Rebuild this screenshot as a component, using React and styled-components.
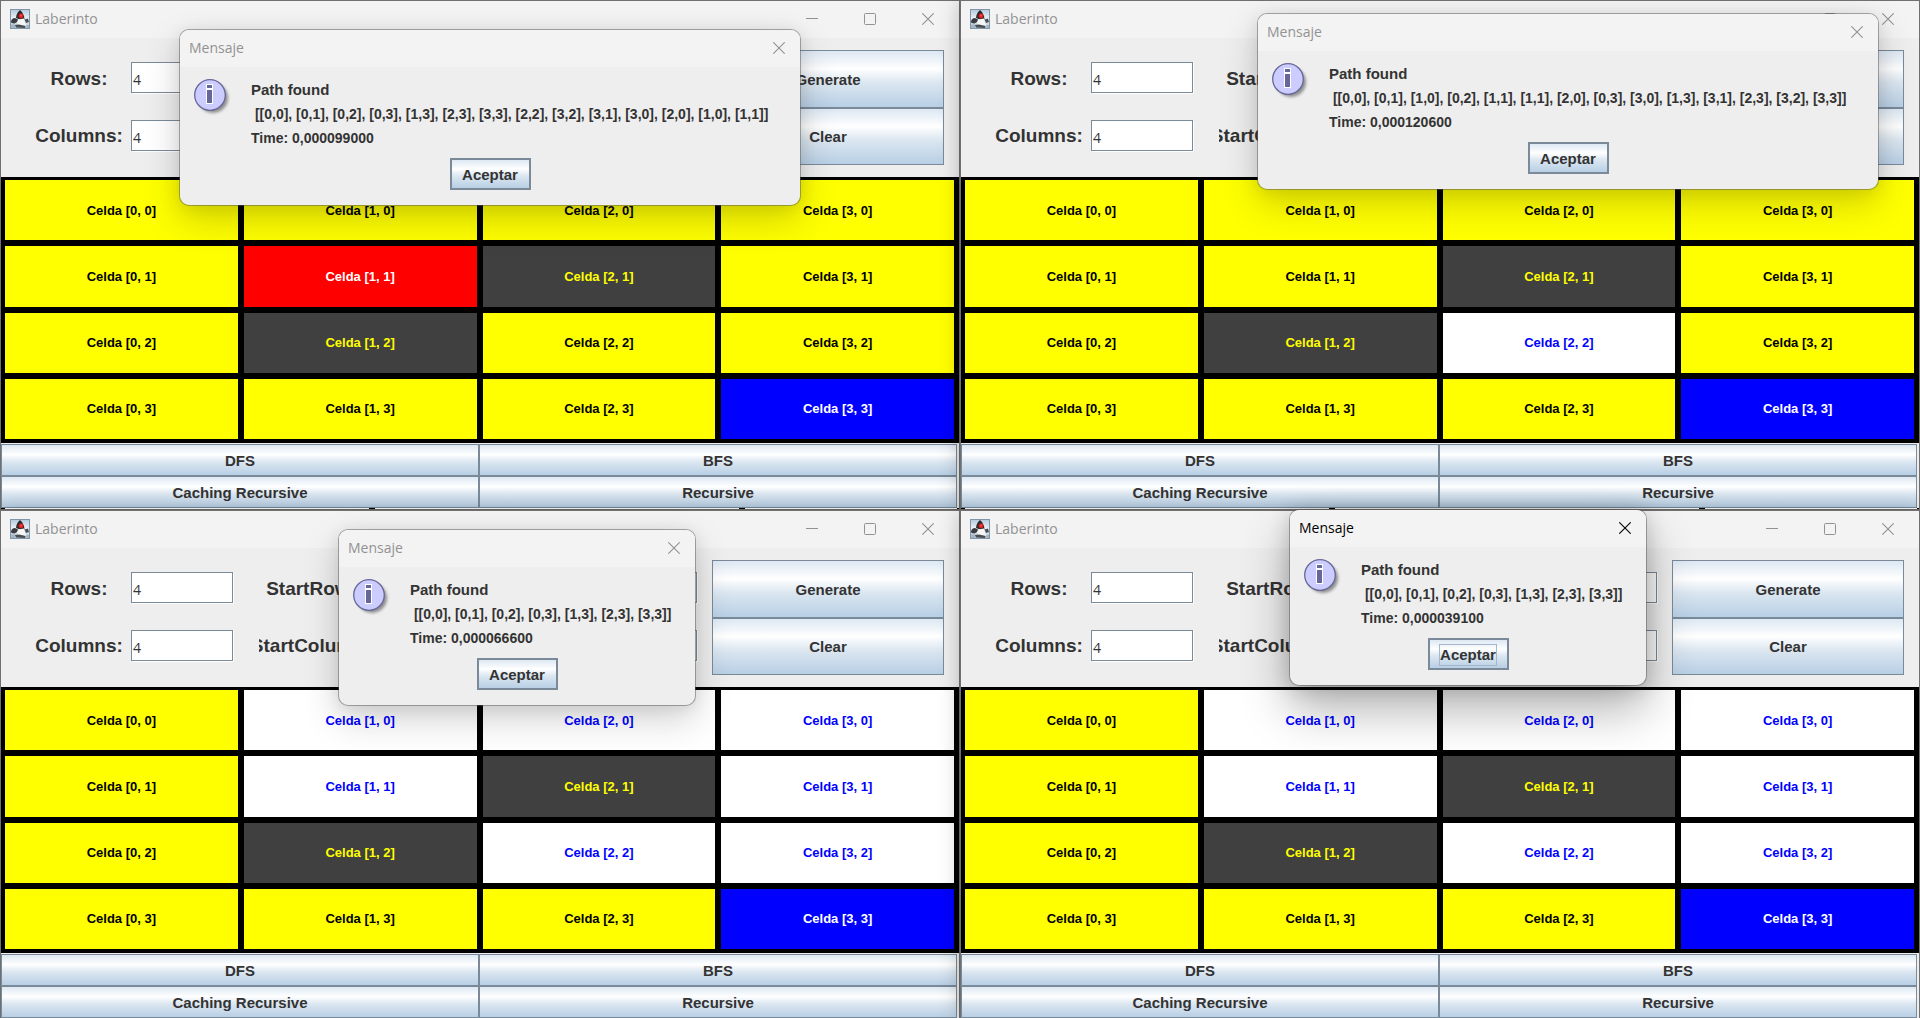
import React, { useId } from "react";
import styled, { createGlobalStyle, css } from "styled-components";

const GlobalStyle = createGlobalStyle`
  *, *::before, *::after { box-sizing: border-box; }
  body {
    margin: 0;
    background: #eeeeee;
    color: #333333;
    font-family: "Liberation Sans", Arial, sans-serif;
    overflow: hidden;
  }
  button, input { font: inherit; color: inherit; margin: 0; border-radius: 0; }
  p { margin: 0; }
`;

const steel = "#7a8a99";

const metal = css`
  background: linear-gradient(#dde8f3 0%, #ffffff 32%, #dce7f1 56%, #b8cfe5 100%);
  border: 1px solid ${steel};
`;

const Desktop = styled.main`
  display: grid;
  grid-template-columns: repeat(2, minmax(0, 1fr));
  height: 100vh;
  align-content: start;
  overflow: hidden;
`;

const Frame = styled.section`
  position: relative;
  z-index: 0;
  display: flex;
  flex-direction: column;
  border: 1px solid #707070;
  background: #eeeeee;
  box-shadow: 0 2px 20px rgba(0, 0, 0, 0.25);
`;

const TitleBar = styled.header`
  display: flex;
  align-items: center;
  height: 37px;
  padding-left: 9px;
  padding-bottom: 1px;
  gap: 5px;
  background: #f3f3f3;
  color: ${(p) => (p.$active ? "#000000" : "#929292")};
  font: 14px/20px "Open Sans", "Noto Sans", sans-serif;
`;

const TitleText = styled.span`
  flex: 1;
`;

const Controls = styled.div`
  display: flex;
  padding-right: 2px;
`;

const ControlButton = styled.button`
  display: grid;
  place-items: center;
  width: ${(p) => (p.$narrow ? 42 : 58)}px;
  height: 36px;
  padding: 0;
  border: 0;
  background: none;
`;

const Settings = styled.form`
  display: grid;
  grid-template-columns: repeat(3, 206px) minmax(0, 1fr);
  column-gap: 26px;
  padding: 12px 15px 12px 26px;
  height: 139px;
`;

const FieldPair = styled.div`
  display: grid;
  grid-template-rows: repeat(2, 1fr);
`;

const Field = styled.div`
  display: grid;
  grid-template-columns: 104px 102px;
  align-items: center;
`;

const FieldLabel = styled.label`
  display: flex;
  justify-content: center;
  overflow: hidden;
  white-space: nowrap;
  font-size: 19px;
  line-height: 24px;
  font-weight: 700;
`;

const FieldInput = styled.input`
  width: 100%;
  height: 31px;
  margin-bottom: 2px;
  padding: 4px 1px 0;
  border: 1px solid ${steel};
  background: #ffffff;
  box-shadow: 1px 1px 0 #ffffff;
  font: 14px/20px "Open Sans", "Noto Sans", sans-serif;
  outline: none;
`;

const Actions = styled.div`
  display: grid;
  grid-template-rows: repeat(2, 1fr);
  margin-left: -11px;
`;

const MetalButton = styled.button`
  ${metal}
  padding: 2px 0 0;
  font-size: 15px;
  line-height: 20px;
  font-weight: 700;
`;

const Maze = styled.div`
  display: grid;
  grid-template: repeat(4, 1fr) / repeat(4, 1fr);
  gap: 6px;
  height: 266px;
  padding: 3px 5px 4px 4px;
  background: #000000;
`;

const tones = {
  visited: { background: "#ffff00", color: "#000000" },
  wall: { background: "#404040", color: "#ffff00" },
  open: { background: "#ffffff", color: "#0000ff" },
  start: { background: "#ff0000", color: "#ffffff" },
  goal: { background: "#0000ff", color: "#ffffff" },
};

const Cell = styled.button`
  padding: 1px 0 0;
  border: 0;
  background: ${(p) => tones[p.$tone].background};
  color: ${(p) => tones[p.$tone].color};
  font-size: 13px;
  line-height: 16px;
  font-weight: 700;
`;

const Solvers = styled.div`
  display: grid;
  grid-template-columns: repeat(2, 1fr);
  grid-auto-rows: 32px;
  padding: 1px 2px 0 0;
`;

const BottomEdge = styled.div`
  height: 1px;
  background: repeating-linear-gradient(90deg, #000000 0 6px, #ffffff 6px 370px);
  background-position-x: -2px;
`;

const DialogBox = styled.section`
  position: absolute;
  z-index: 1;
  left: ${(p) => p.$x}px;
  top: ${(p) => p.$y}px;
  width: ${(p) => p.$width}px;
  border: 1px solid rgba(90, 90, 90, 0.5);
  border-radius: 10px;
  background: #eeeeee;
  background-clip: padding-box;
  box-shadow: ${(p) =>
    p.$active
      ? "0 24px 48px rgba(0, 0, 0, 0.3), 0 2px 20px rgba(0, 0, 0, 0.16)"
      : "0 14px 36px rgba(0, 0, 0, 0.18), 0 2px 16px rgba(0, 0, 0, 0.08)"};

  ${TitleBar} {
    border-radius: 9px 9px 0 0;
  }
`;

const DialogBody = styled.div`
  display: grid;
  grid-template-columns: 40px minmax(0, 1fr);
  column-gap: 17px;
  padding: 11px 14px 15px;
`;

const Message = styled.div`
  font-size: 15px;
  line-height: 24px;
  font-weight: 700;
  white-space: pre;
`;

const Result = styled.p`
  font-size: 14px;
`;

const DialogFooter = styled.div`
  grid-column: 1 / -1;
  display: flex;
  justify-content: center;
  padding-top: 8px;
`;

const AcceptButton = styled(MetalButton)`
  width: 81px;
  height: 32px;
  border-width: 2px;
`;

const FocusMark = styled.span`
  display: inline-block;
  outline: ${(p) => (p.$focused ? "1px solid #a3b8cc" : "none")};
`;

const InfoPicture = styled.svg`
  display: block;
`;

function DukeIcon() {
  return (
    <svg width="20" height="20" viewBox="0 0 20 20" aria-hidden="true">
      <defs>
        <linearGradient id="dukeSky" x1="0" y1="0" x2="0" y2="1">
          <stop offset="0" stopColor="#b4cbdc" />
          <stop offset="0.5" stopColor="#eef3f6" />
          <stop offset="1" stopColor="#b3c4d1" />
        </linearGradient>
      </defs>
      <rect x="0.5" y="0.5" width="19" height="19" fill="url(#dukeSky)" stroke="#7f95a9" />
      <path d="M8 3 L10 1 L12 3 L14 7 L14.500 10.500 L11 11 L6 9 L6.500 6 Z" fill="#2c2c30" />
      <path d="M8 10.500 L14 9.500 L15 13 L16 17 L12 16 L8 16 L7 13 Z" fill="#f6f6f6" />
      <path d="M1 12.500 Q1.500 9 5 9 L8 10.500 L7 13 L4.500 14.500 L1.500 14 Z" fill="#3c3c40" />
      <path d="M14.500 10.500 L18 9.500 L19 13 L16 14 Z" fill="#4c5056" />
      <path d="M5 16 L9 15.500 L15.500 17 L15 19 L6 18.500 Z" fill="#4a4d51" />
      <path d="M1 15.500 L5 15.500 L5 19 L1 19 Z M16.500 16 H19 V19 H16.500 Z" fill="#a3b4c3" />
      <circle cx="11" cy="7" r="2.400" fill="#e01c1c" />
      <circle cx="11" cy="6.500" r="1.100" fill="#ff4434" />
    </svg>
  );
}

function InfoIcon() {
  return (
    <InfoPicture width="40" height="40" viewBox="0 0 40 40" aria-hidden="true">
      <defs>
        <filter id="infoShadow" x="-20%" y="-20%" width="150%" height="150%">
          <feGaussianBlur stdDeviation="1.600" />
        </filter>
      </defs>
      <circle cx="19" cy="20" r="15" fill="#000000" opacity="0.4" filter="url(#infoShadow)" />
      <circle cx="16" cy="17" r="15.300" fill="#ccccff" stroke="#666699" strokeWidth="1.300" />
      <path d="M12 6 H19 V26 H12 Z" fill="#ffffff" />
      <path d="M13 7 H18 V10 H13 Z M13 12 H18 V25 H13 Z" fill="#666699" />
    </InfoPicture>
  );
}

function Glyph({ kind }) {
  return (
    <svg
      width="12"
      height="12"
      viewBox="0 0 12 12"
      fill="none"
      stroke="currentColor"
      strokeWidth="1.100"
      aria-hidden="true"
    >
      {kind === "minimize" && <path d="M0 5.500 H12" strokeWidth="1" />}
      {kind === "maximize" && <rect x="0.500" y="0.500" width="11" height="11" rx="1" strokeWidth="1" />}
      {kind === "close" && <path d="M0.300 0.300 L11.700 11.700 M11.700 0.300 L0.300 11.700" />}
    </svg>
  );
}

function LabelledInput({ label, value }) {
  const id = useId();
  return (
    <Field>
      <FieldLabel htmlFor={id}>{label}</FieldLabel>
      <FieldInput id={id} type="text" defaultValue={value} />
    </Field>
  );
}

function Dialog({ x, y, width, path, time, active }) {
  return (
    <DialogBox role="dialog" aria-label="Mensaje" $x={x} $y={y} $width={width} $active={active}>
      <TitleBar $active={active}>
        <TitleText>Mensaje</TitleText>
        <ControlButton type="button" aria-label="Cerrar" $narrow>
          <Glyph kind="close" />
        </ControlButton>
      </TitleBar>
      <DialogBody>
        <InfoIcon />
        <Message>
          <p>Path found</p>
          <Result>{" " + path}</Result>
          <Result>Time: {time}</Result>
        </Message>
        <DialogFooter>
          <AcceptButton type="button">
            <FocusMark $focused={active}>Aceptar</FocusMark>
          </AcceptButton>
        </DialogFooter>
      </DialogBody>
    </DialogBox>
  );
}

const letters = { y: "visited", w: "wall", o: "open", s: "start", g: "goal" };

function MazeWindow({ rows, dialog }) {
  return (
    <Frame>
      <TitleBar>
        <DukeIcon />
        <TitleText>Laberinto</TitleText>
        <Controls>
          {["minimize", "maximize", "close"].map((kind) => (
            <ControlButton key={kind} type="button" aria-label={kind}>
              <Glyph kind={kind} />
            </ControlButton>
          ))}
        </Controls>
      </TitleBar>
      <Settings>
        <FieldPair>
          <LabelledInput label="Rows:" value="4" />
          <LabelledInput label="Columns:" value="4" />
        </FieldPair>
        <FieldPair>
          <LabelledInput label="StartRow:" value="0" />
          <LabelledInput label="StartColumn:" value="0" />
        </FieldPair>
        <FieldPair>
          <LabelledInput label="EndRow:" value="3" />
          <LabelledInput label="EndColumn:" value="3" />
        </FieldPair>
        <Actions>
          <MetalButton type="button">Generate</MetalButton>
          <MetalButton type="button">Clear</MetalButton>
        </Actions>
      </Settings>
      <Maze>
        {rows.flatMap((row, r) =>
          [...row].map((letter, c) => (
            <Cell key={`${c}-${r}`} type="button" $tone={letters[letter]}>
              {`Celda [${c}, ${r}]`}
            </Cell>
          ))
        )}
      </Maze>
      <Solvers>
        {["DFS", "BFS", "Caching Recursive", "Recursive"].map((name) => (
          <MetalButton key={name} type="button">
            {name}
          </MetalButton>
        ))}
      </Solvers>
      <BottomEdge />
      <Dialog {...dialog} />
    </Frame>
  );
}

const shortPath = "[[0,0], [0,1], [0,2], [0,3], [1,3], [2,3], [3,3]]";

const windows = [
  {
    rows: ["yyyy", "yswy", "ywyy", "yyyg"],
    dialog: {
      x: 178,
      y: 28,
      width: 622,
      path: "[[0,0], [0,1], [0,2], [0,3], [1,3], [2,3], [3,3], [2,2], [3,2], [3,1], [3,0], [2,0], [1,0], [1,1]]",
      time: "0,000099000",
    },
  },
  {
    rows: ["yyyy", "yywy", "ywoy", "yyyg"],
    dialog: {
      x: 296,
      y: 12,
      width: 622,
      path: "[[0,0], [0,1], [1,0], [0,2], [1,1], [1,1], [2,0], [0,3], [3,0], [1,3], [3,1], [2,3], [3,2], [3,3]]",
      time: "0,000120600",
    },
  },
  {
    rows: ["yooo", "yowo", "ywoo", "yyyg"],
    dialog: { x: 337, y: 18, width: 358, path: shortPath, time: "0,000066600" },
  },
  {
    rows: ["yooo", "yowo", "ywoo", "yyyg"],
    dialog: { x: 328, y: -2, width: 358, path: shortPath, time: "0,000039100", active: true },
  },
];

export default function App() {
  return (
    <>
      <GlobalStyle />
      <Desktop>
        {windows.map((w, i) => (
          <MazeWindow key={i} {...w} />
        ))}
      </Desktop>
    </>
  );
}
